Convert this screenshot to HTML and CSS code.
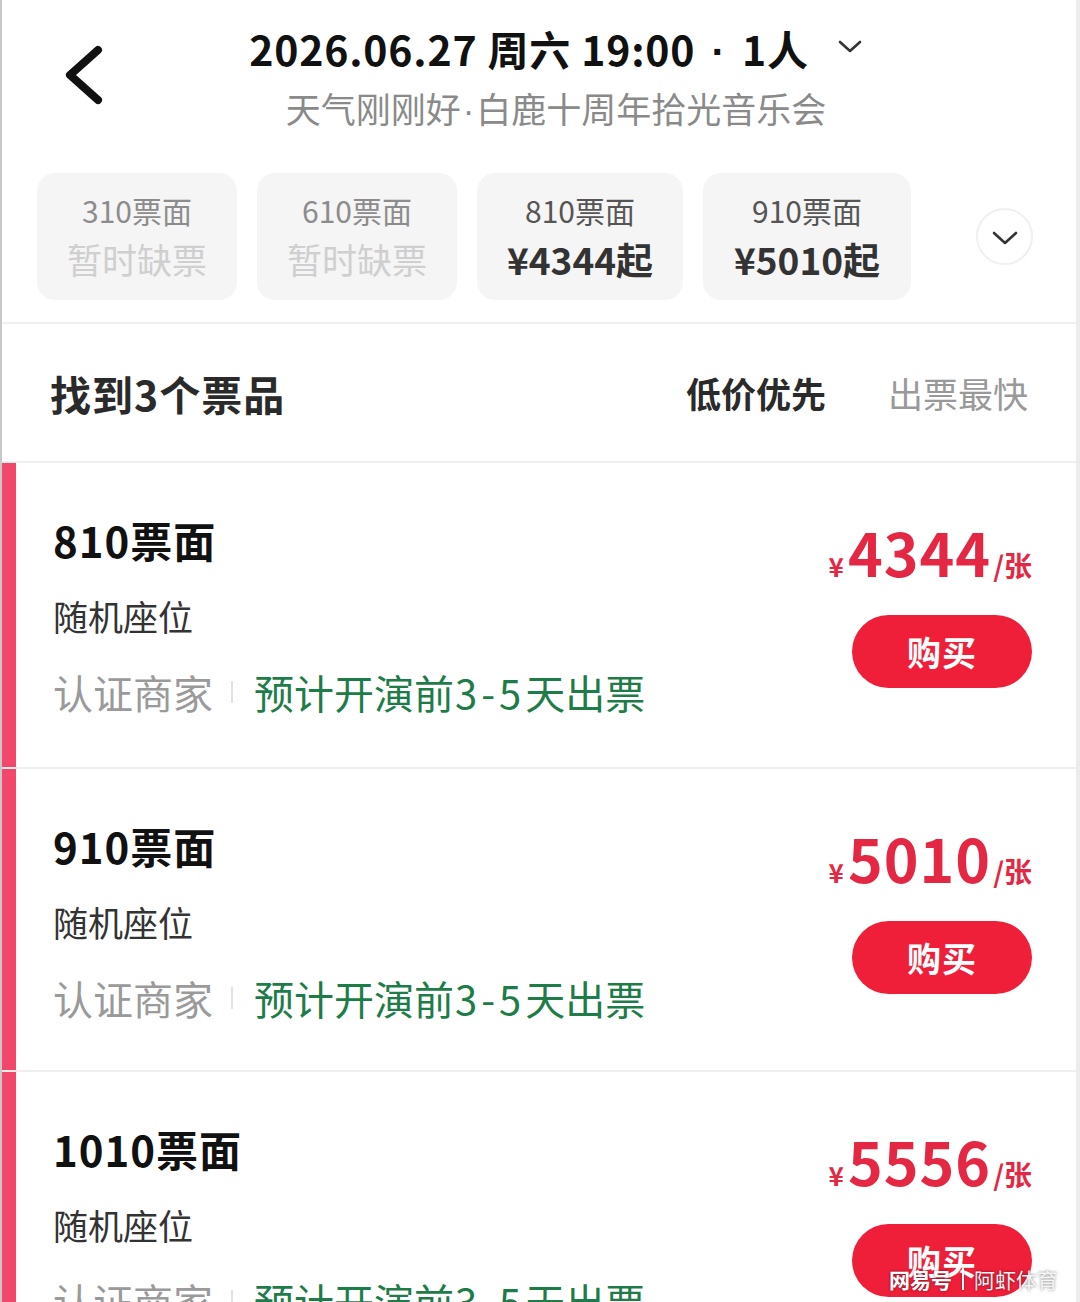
FILE: index.html
```html
<!DOCTYPE html>
<html lang="zh-CN">
<head>
<meta charset="utf-8">
<link rel="stylesheet" href="styles.css">
</head>
<body>
<div class="page">
  <header class="header">
    <div class="back">
      <svg width="44" height="64" viewBox="0 0 44 64"><path d="M36 6 L8 31 L36 56" fill="none" stroke="#111" stroke-width="8" stroke-linecap="round" stroke-linejoin="round"/></svg>
    </div>
    <div class="head-center">
      <div class="title-row">
        <span class="title">2026.06.27 周六 19:00 <span class="dot">·</span> 1人</span>
        <svg class="title-caret" width="26" height="16" viewBox="0 0 26 16"><path d="M3 3 L13 12 L23 3" fill="none" stroke="#333" stroke-width="2.6" stroke-linecap="round" stroke-linejoin="round"/></svg>
      </div>
      <div class="subtitle">天气刚刚好<span class="sdot">·</span>白鹿十周年拾光音乐会</div>
    </div>
    <div class="head-right"></div>
  </header>

  <div class="chips">
    <div class="chip chip-off"><div class="chip-name">310票面</div><div class="chip-val">暂时缺票</div></div>
    <div class="chip chip-off"><div class="chip-name">610票面</div><div class="chip-val">暂时缺票</div></div>
    <div class="chip chip-on w1"><div class="chip-name">810票面</div><div class="chip-val">¥4344起</div></div>
    <div class="chip chip-on w2"><div class="chip-name">910票面</div><div class="chip-val">¥5010起</div></div>
    <div class="more">
      <svg width="28" height="18" viewBox="0 0 28 18"><path d="M3 4 L14 14 L25 4" fill="none" stroke="#333" stroke-width="2.6" stroke-linecap="round" stroke-linejoin="round"/></svg>
    </div>
  </div>

  <div class="sortbar">
    <div class="found">找到3个票品</div>
    <div class="sorts">
      <span class="sort active">低价优先</span>
      <span class="sort">出票最快</span>
    </div>
  </div>

  <div class="list">
    <div class="ticket">
      <div class="strip"></div>
      <div class="tbody">
        <div class="tleft">
          <div class="tname">810票面</div>
          <div class="tseat">随机座位</div>
          <div class="tmeta"><span class="seller">认证商家</span><span class="bar"></span><span class="eta">预计开演前<span class="range">3-5</span>天出票</span></div>
        </div>
        <div class="tright">
          <div class="price"><span class="yen">¥</span><span class="num">4344</span><span class="unit">/张</span></div>
          <div class="buy">购买</div>
        </div>
      </div>
    </div>
    <div class="ticket">
      <div class="strip"></div>
      <div class="tbody">
        <div class="tleft">
          <div class="tname">910票面</div>
          <div class="tseat">随机座位</div>
          <div class="tmeta"><span class="seller">认证商家</span><span class="bar"></span><span class="eta">预计开演前<span class="range">3-5</span>天出票</span></div>
        </div>
        <div class="tright">
          <div class="price"><span class="yen">¥</span><span class="num">5010</span><span class="unit">/张</span></div>
          <div class="buy">购买</div>
        </div>
      </div>
    </div>
    <div class="ticket">
      <div class="strip"></div>
      <div class="tbody">
        <div class="tleft">
          <div class="tname">1010票面</div>
          <div class="tseat">随机座位</div>
          <div class="tmeta"><span class="seller">认证商家</span><span class="bar"></span><span class="eta">预计开演前<span class="range">3-5</span>天出票</span></div>
        </div>
        <div class="tright">
          <div class="price"><span class="yen">¥</span><span class="num">5556</span><span class="unit">/张</span></div>
          <div class="buy">购买</div>
        </div>
      </div>
    </div>
  </div>

  <div class="watermark"><span class="wm-logo">网易号</span><span class="wm-sep"></span><span class="wm-name">阿虾体育</span></div>
</div>
</body>
</html>
```

FILE: styles.css
```css
* { box-sizing: border-box; }
html, body { margin: 0; padding: 0; background: #fff; }
body {
  font-family: "Noto Sans CJK SC", "Noto Sans", sans-serif;
  color: #222;
}
.page {
  position: relative;
  width: 1080px;
  height: 1302px;
  overflow: hidden;
  border-left: 2px solid #c8c8c8;
  border-right: 4px solid #ececec;
}

/* header */
.header {
  display: flex;
  height: 173px;
}
.back {
  width: 138px;
  flex: none;
  padding: 44px 0 0 60px;
}
.back svg { display: block; }
.head-right { width: 104px; flex: none; }
.head-center {
  flex: 1;
  display: flex;
  flex-direction: column;
  align-items: center;
  padding-top: 22px;
}
.title-row {
  display: flex;
  align-items: center;
  height: 56px;
}
.title {
  font-size: 41px;
  font-weight: 700;
  color: #111;
  letter-spacing: 0.8px;
  line-height: 56px;
  white-space: nowrap;
}
.dot {
  font-family: "Liberation Sans", sans-serif;
  font-weight: 700;
  margin: 0 6px;
}
.title-caret { margin-left: 28px; margin-top: -6px; }
.subtitle {
  margin-top: 8px;
  font-size: 35px;
  line-height: 44px;
  color: #8a8a8a;
  white-space: nowrap;
}
.sdot {
  font-family: "Liberation Sans", sans-serif;
  margin: 0 2px;
}

/* chips */
.chips {
  display: flex;
  align-items: center;
  height: 127px;
  padding-left: 35px;
  gap: 20px;
}
.chip {
  width: 200px;
  height: 127px;
  border-radius: 18px;
  background: #f5f5f5;
  display: flex;
  flex-direction: column;
  align-items: center;
  padding-top: 17px;
}
.chip.w1 { width: 206px; }
.chip.w2 { width: 208px; }
.chip-name {
  font-size: 30px;
  line-height: 40px;
  color: #8c8c8c;
}
.chip-on .chip-name { color: #555; }
.chip-val {
  margin-top: 6px;
  font-size: 35px;
  line-height: 46px;
  color: #cfcfcf;
}
.chip-on .chip-val { color: #333; font-weight: 700; font-size: 37px; }
.more {
  margin-left: 45px;
  width: 57px;
  height: 57px;
  border-radius: 50%;
  border: 2px solid #f0f0f0;
  display: flex;
  align-items: center;
  justify-content: center;
}
.more svg { margin-top: 2px; }

/* sort bar */
.sortbar {
  margin-top: 22px;
  height: 141px;
  border-top: 2px solid #efefef;
  border-bottom: 2px solid #efefef;
  display: flex;
  align-items: center;
  justify-content: space-between;
  padding: 0 48px 0 48px;
}
.found {
  font-size: 41px;
  font-weight: 700;
  color: #2a2a2a;
  letter-spacing: 1px;
}
.sorts { display: flex; gap: 62px; }
.sort {
  font-size: 35px;
  color: #999;
}
.sort.active { color: #2a2a2a; font-weight: 700; }

/* tickets */
.list {
  display: flex;
  flex-direction: column;
}
.ticket {
  display: flex;
  height: 304px;
  flex: none;
}
.ticket + .ticket { border-top: 2px solid #fde8ec; height: 303px; }
.strip {
  width: 14px;
  flex: none;
  background: #f2476a;
}
.tbody {
  flex: 1;
  margin-left: 6px;
  display: flex;
  justify-content: space-between;
  padding: 0 44px 0 31px;
}
.ticket + .ticket .tbody { border-top: 2px solid #efefef; margin-top: -2px; }
.tleft {
  display: flex;
  flex-direction: column;
  padding-top: 50px;
}
.tname {
  font-size: 42px;
  font-weight: 700;
  color: #111;
  line-height: 54px;
  letter-spacing: 1px;
}
.tseat {
  margin-top: 24px;
  font-size: 35px;
  line-height: 50px;
  color: #333;
}
.tmeta {
  margin-top: 24px;
  display: flex;
  align-items: center;
  line-height: 54px;
}
.seller {
  font-size: 40px;
  color: #9a9a9a;
}
.bar {
  width: 2px;
  height: 22px;
  background: #e2e2e2;
  margin: 0 21px 0 18px;
}
.eta {
  font-size: 40px;
  color: #1d7c48;
}
.range { letter-spacing: 4px; margin-left: 1px; }
.tright {
  display: flex;
  flex-direction: column;
  align-items: flex-end;
  padding-top: 57px;
}
.price {
  color: #e42843;
  display: flex;
  align-items: baseline;
  height: 64px;
  line-height: 64px;
}
.yen { font-size: 26px; font-weight: 700; margin-right: 4px; }
.num { font-size: 59px; font-weight: 700; letter-spacing: 1px; }
.unit { font-size: 28px; font-weight: 700; margin-left: 2px; }
.buy {
  margin-top: 31px;
  width: 180px;
  height: 73px;
  border-radius: 37px;
  background: #ef1f3a;
  color: #fff;
  font-size: 34px;
  font-weight: 700;
  display: flex;
  align-items: center;
  justify-content: center;
  letter-spacing: 1px;
}

/* watermark overlay */
.watermark {
  position: absolute;
  right: 18px;
  bottom: 8px;
  display: flex;
  align-items: center;
  color: #fff;
  text-shadow: 0 0 3px rgba(0,0,0,0.5);
  font-size: 21px;
}
.wm-logo { font-weight: 700; }
.wm-sep { width: 2px; height: 22px; background: #fff; margin: 0 10px; box-shadow: 0 0 2px rgba(0,0,0,0.4); }
.wm-name { color: #f4f4f4; }
```
